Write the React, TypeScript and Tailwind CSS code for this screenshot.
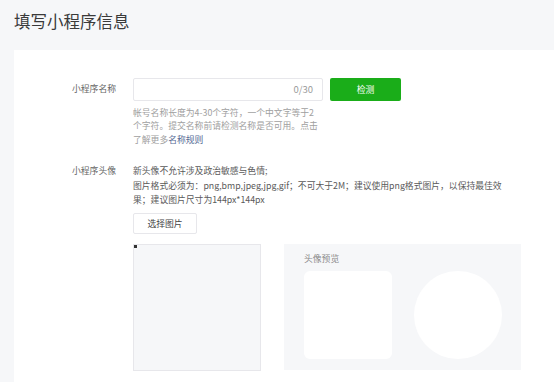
export default function App() {
  return (
    <div className="min-h-screen bg-[#f6f7f9] font-['Noto_Sans_CJK_SC',sans-serif] text-[#353535]">
      <h1 className="h-[50px] px-[14px] pt-[12px] text-[16.5px] leading-[19px] font-normal text-[#3a3a3a]">填写小程序信息</h1>
      <div className="ml-[14px] min-h-[340px] bg-white pl-[58px] pt-[28px]">
        {/* 名称 */}
        <div className="flex">
          <div className="w-[61px] text-[8.8px] leading-[21px] text-[#666]">小程序名称</div>
          <div>
            <div className="flex gap-[7px]">
              <div className="flex h-[23px] w-[190px] items-center justify-end rounded-[2px] border border-[#e7e7eb] pr-[9px] text-[9.5px] text-[#9a9a9a]">
                0/30
              </div>
              <button className="h-[23px] w-[71px] rounded-[2px] bg-[#1aad19] text-[8.8px] text-white">检测</button>
            </div>
            <p className="mt-[5px] whitespace-nowrap text-[8.8px] leading-[13.3px] text-[#a0a0a0]">
              帐号名称长度为4-30个字符，一个中文字等于2
              <br />
              个字符。提交名称前请检测名称是否可用。点击
              <br />
              了解更多<span className="text-[#576b95]">名称规则</span>
            </p>
          </div>
        </div>

        {/* 头像 */}
        <div className="mt-[18px] flex">
          <div className="w-[61px] text-[8.8px] leading-[14.8px] text-[#666]">小程序头像</div>
          <div>
            <p className="whitespace-nowrap text-[8.8px] leading-[14.8px] text-[#5a5a5a]">
              新头像不允许涉及政治敏感与色情;
              <br />
              图片格式必须为：png,bmp,jpeg,jpg,gif；不可大于2M；建议使用png格式图片，以保持最佳效
              <br />
              果；建议图片尺寸为144px*144px
            </p>
            <button className="mt-[4px] h-[21px] w-[64px] rounded-[2px] border border-[#e7e7eb] bg-white text-[8.8px] text-[#444]">
              选择图片
            </button>
            <div className="mt-[10px] flex gap-[23px]">
              <div className="relative h-[127px] w-[128px] border border-[#e7e7eb] bg-[#f6f7f9]">
                <span className="absolute left-0 top-0 h-[3px] w-[3px] bg-[#333]" />
              </div>
              <div className="h-[126px] w-[237px] bg-[#f6f7f9] pl-[20px] pt-[9px]">
                <div className="text-[8.8px] leading-[12px] text-[#8a8a8a]">头像预览</div>
                <div className="mt-[6px] flex gap-[22px]">
                  <div className="h-[88px] w-[88px] rounded-[6px] bg-white" />
                  <div className="h-[88px] w-[88px] rounded-full bg-white" />
                </div>
              </div>
            </div>
          </div>
        </div>
      </div>
    </div>
  );
}
